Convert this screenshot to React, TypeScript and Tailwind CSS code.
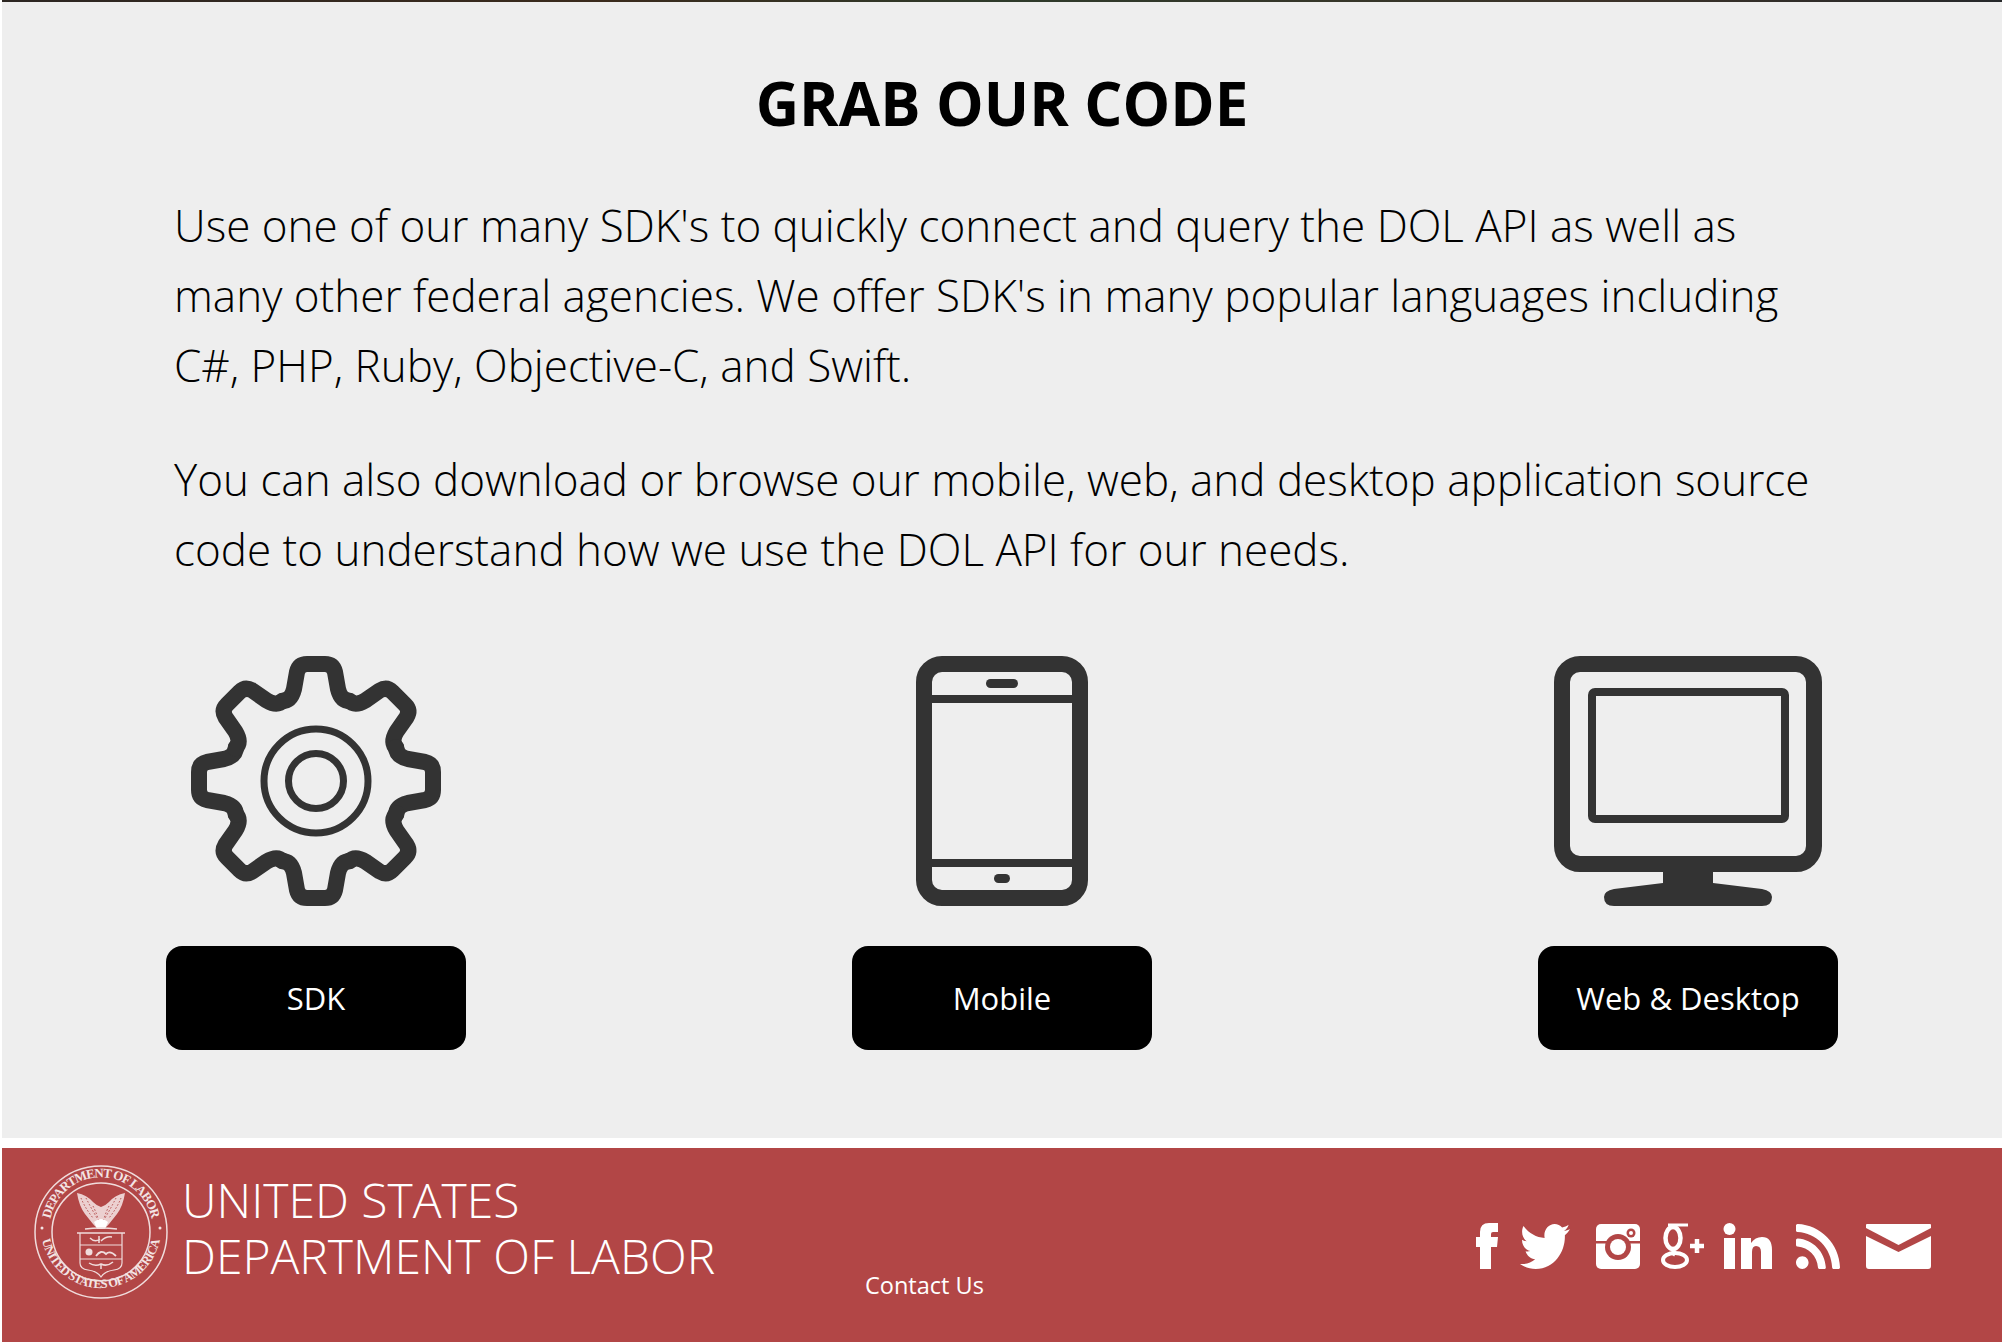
import { FaTwitter, FaRss } from "react-icons/fa";

const teeth = [0, 45, 90, 135, 180, 225, 270, 315];

function GearIcon() {
    return (
        <svg width="250" height="250" viewBox="-125 -125 250 250" fill="none" stroke="#333333">
            {teeth.map((deg) => (
                <path
                    key={deg}
                    transform={`rotate(${deg})`}
                    strokeWidth="16"
                    strokeLinejoin="round"
                    strokeLinecap="round"
                    d="M-34 -80 Q-25 -80 -22 -92 L-19 -109 Q-17 -117 -9 -117 H9 Q17 -117 19 -109 L22 -92 Q25 -80 34 -80"
                />
            ))}
            <circle r="52" strokeWidth="7" />
            <circle r="27.5" strokeWidth="7" />
        </svg>
    );
}

function PhoneIcon() {
    return (
        <svg width="172" height="250" viewBox="0 0 172 250" fill="#333333">
            <rect x="8" y="8" width="156" height="234" rx="18" fill="none" stroke="#333333" strokeWidth="16" />
            <rect x="10" y="39" width="152" height="8" />
            <rect x="10" y="203" width="152" height="8" />
            <rect x="70" y="23" width="32" height="9" rx="4.5" />
            <rect x="78" y="218" width="16" height="9" rx="4.5" />
        </svg>
    );
}

function MonitorIcon() {
    return (
        <svg width="268" height="250" viewBox="0 0 268 250" fill="#333333">
            <rect x="8" y="8" width="252" height="200" rx="18" fill="none" stroke="#333333" strokeWidth="16" />
            <rect x="38" y="36" width="193" height="127" rx="3" fill="none" stroke="#333333" strokeWidth="8" />
            <path d="M109 214 V227 L60 233 Q50 235 50 241 Q50 250 60 250 H208 Q218 250 218 241 Q218 235 208 233 L159 227 V214 Z" />
        </svg>
    );
}

function FacebookIcon() {
    return (
        <svg width="22" height="46" viewBox="0 0 22 46" fill="white">
            <path d="M4 46 V24 H0 V14 H4 V9 Q4 0 13 0 H22 V9 H17 Q15 9 15 11 V14 H22 L21 24 H15 V46 Z" />
        </svg>
    );
}

function InstagramIcon() {
    return (
        <svg width="44" height="45" viewBox="0 0 44 45">
            <rect width="44" height="45" rx="5" fill="white" />
            <rect y="17" width="44" height="2.5" fill="#b24646" />
            <circle cx="22" cy="23" r="13" fill="#b24646" />
            <circle cx="22" cy="23" r="8" fill="white" />
            <circle cx="35" cy="9" r="4.5" fill="#b24646" />
            <circle cx="35" cy="9" r="2" fill="white" />
        </svg>
    );
}

function GooglePlusIcon() {
    return (
        <svg width="44" height="46" viewBox="0 0 44 46" fill="none" stroke="white">
            <path strokeWidth="3" d="M8 2 H28" />
            <ellipse cx="13" cy="15" rx="7.5" ry="11" strokeWidth="4.5" />
            <path strokeWidth="3.5" d="M15 27 Q11 30 15 32" />
            <ellipse cx="15" cy="37" rx="12" ry="7" strokeWidth="4" />
            <path strokeWidth="4.5" d="M37 16 V30 M30 23 H44" />
        </svg>
    );
}

function LinkedinIcon() {
    return (
        <svg width="49" height="46" viewBox="0 0 49 46" fill="white">
            <circle cx="6.5" cy="6" r="6" />
            <rect x="1" y="15" width="11" height="31" />
            <path d="M18 15 H28 V20 Q32 14 39 14 Q49 14 49 27 V46 H38 V29 Q38 23 33 23 Q29 23 29 29 V46 H18 Z" />
        </svg>
    );
}

function MailIcon() {
    return (
        <svg width="67" height="45" viewBox="0 0 67 45" fill="white">
            <path d="M2 0 H65 Q66 0 66 1 V4 L33.5 21 L1 4 V1 Q1 0 2 0 Z" />
            <path d="M1 12 L33.5 28 L66 12 V42 Q66 45 63 45 H4 Q1 45 1 42 Z" />
        </svg>
    );
}

function Seal() {
    return (
        <svg width="136" height="136" viewBox="0 0 136 136" className="shrink-0" fill="none" stroke="#f0dcdc">
            <defs>
                <path id="sealTop" d="M17 72 A51.5 51.5 0 1 1 119 72" />
                <path id="sealBottom" d="M8 64 A60 60 0 1 0 128 64" />
            </defs>
            <circle cx="68" cy="68" r="66" strokeWidth="1.5" />
            <circle cx="68" cy="68" r="49" strokeWidth="1.5" />
            <text fill="#f3e4e4" stroke="none" fontSize="13" fontWeight="700" fontFamily="'Liberation Serif', serif">
                <textPath href="#sealTop" startOffset="50%" textAnchor="middle" textLength="142" lengthAdjust="spacing">DEPARTMENT OF LABOR</textPath>
            </text>
            <text fill="#f3e4e4" stroke="none" fontSize="12.5" fontWeight="700" fontFamily="'Liberation Serif', serif">
                <textPath href="#sealBottom" startOffset="50%" textAnchor="middle" textLength="164" lengthAdjust="spacing">UNITED STATES OF AMERICA</textPath>
            </text>
            <circle cx="9" cy="64" r="1.5" fill="#f3e4e4" stroke="none" />
            <circle cx="127" cy="64" r="1.5" fill="#f3e4e4" stroke="none" />
            {/* eagle */}
            <path fill="#ecd0d0" stroke="none" d="M44 29 Q54 31 60 38 Q64 42 68 43 Q72 42 76 38 Q82 31 92 29 Q90 42 84 50 L76 60 Q72 65 68 65 Q64 65 60 60 L52 50 Q46 42 44 29 Z" />
            <path stroke="#b24646" strokeWidth="1" strokeDasharray="1.5 2" d="M48 34 Q52 44 60 54 M53 34 Q58 44 64 54 M88 34 Q84 44 76 54 M83 34 Q78 44 72 54 M60 42 Q64 50 66 58 M76 42 Q72 50 70 58" />
            <path fill="white" stroke="none" d="M61 58 Q68 52 75 58 L72 65 H64 Z" />
            <path strokeWidth="1.5" d="M52 65 Q68 63 84 65" />
            {/* shield */}
            <path strokeWidth="1.5" d="M44 69 H92" />
            <path strokeWidth="1.2" d="M47 69 V99 Q47 105 55 106 Q64 107 68 113 Q72 107 81 106 Q89 105 89 99 V69" />
            <path strokeWidth="1" d="M47 81 H89 M47 95 H89" />
            <path strokeWidth="1.5" d="M57 74 Q62 79 67 75 M68 77 Q73 72 79 73 M66 72 V79" />
            <circle cx="56" cy="88" r="3.5" fill="#f0dcdc" stroke="none" />
            <path strokeWidth="1.8" d="M63 92 Q68 85 73 90 Q77 86 83 92" />
            <path strokeWidth="1.5" d="M56 99 Q62 103 68 100 Q74 103 80 98 M68 100 V105" />
        </svg>
    );
}

const cards = [
    { label: "SDK", icon: <GearIcon /> },
    { label: "Mobile", icon: <PhoneIcon /> },
    { label: "Web & Desktop", icon: <MonitorIcon /> },
];

export default function App() {
    return (
        <div className="bg-white h-[1342px] overflow-hidden px-[2px] font-['Open_Sans',sans-serif]">
            <div className="h-[2px] bg-[linear-gradient(90deg,#2c2622,#3a2a1c_30%,#2e3a2a_50%,#3b3228_80%,#26282a)]" />
            <section className="bg-[#eeeeee] h-[1136px] pt-[63px]">
                <h1 className="text-center text-[60px] leading-[76px] font-bold text-black">GRAB OUR CODE</h1>
                <div className="mt-[49px] px-[172px] text-[44px] leading-[70px] font-light text-black">
                    <p>Use one of our many SDK's to quickly connect and query the DOL API as well as many other federal agencies. We offer SDK's in many popular languages including C#, PHP, Ruby, Objective-C, and Swift.</p>
                    <p className="mt-[44px]">You can also download or browse our mobile, web, and desktop application source code to understand how we use the DOL API for our needs.</p>
                </div>
                <div className="mt-[72px] px-[164px] flex justify-between">
                    {cards.map((card) => (
                        <div key={card.label} className="flex flex-col items-center w-[300px]">
                            <div className="h-[250px] flex items-center justify-center">{card.icon}</div>
                            <a className="mt-[40px] w-[300px] h-[104px] bg-black text-white rounded-[16px] flex items-center justify-center text-[31px]">{card.label}</a>
                        </div>
                    ))}
                </div>
            </section>
            <footer className="mt-[10px] h-[194px] bg-[#b24646] text-white flex">
                <div className="pl-[31px] pt-[16px] shrink-0">
                    <Seal />
                </div>
                <div className="pl-[13px] pt-[24px] w-[696px] shrink-0 text-[48px] leading-[56px] font-light">
                    <div>UNITED STATES</div>
                    <div>DEPARTMENT OF LABOR</div>
                </div>
                <a className="mt-[120px] text-[23.5px] leading-[34px] h-[34px]">Contact Us</a>
                <div className="ml-auto mr-[70px] mt-[75px] h-[46px] flex items-center">
                    <FacebookIcon />
                    <FaTwitter viewBox="0 48 512 416" preserveAspectRatio="none" className="ml-[22px] w-[50px] h-[45px]" />
                    <div className="ml-[26px]"><InstagramIcon /></div>
                    <div className="ml-[20px]"><GooglePlusIcon /></div>
                    <div className="ml-[19px]"><LinkedinIcon /></div>
                    <FaRss viewBox="0 32 448 448" preserveAspectRatio="none" className="ml-[24px] w-[44px] h-[45px]" />
                    <div className="ml-[25px]"><MailIcon /></div>
                </div>
            </footer>
        </div>
    );
}
